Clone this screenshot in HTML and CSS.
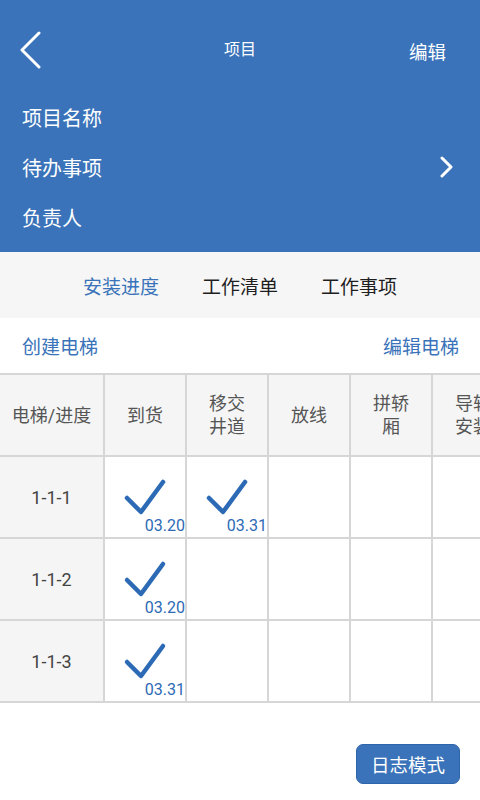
FILE: index.html
```html
<!DOCTYPE html>
<html>
<head>
<meta charset="utf-8">
<title>项目</title>
<link rel="stylesheet" href="styles.css">
</head>
<body>
    <!-- header -->
    <div class="header">
        <div class="topbar">
            <svg class="back" width="30" height="40" viewBox="0 0 30 40">
                <path d="M19 2 L2 19 L19 36" fill="none" stroke="#fff" stroke-width="3" stroke-linecap="round" stroke-linejoin="round"/>
            </svg>
            <div class="title">项目</div>
            <div class="edit">编辑</div>
        </div>
        <div class="info">
            <div class="info-row">项目名称</div>
            <div class="info-row">待办事项
                <svg class="more" width="14" height="22" viewBox="0 0 14 22">
                    <path d="M2 2 L11 11 L2 20" fill="none" stroke="#fff" stroke-width="3" stroke-linecap="round" stroke-linejoin="round"/>
                </svg>
            </div>
            <div class="info-row">负责人</div>
        </div>
    </div>

    <!-- tabs -->
    <div class="tabs">
        <div class="tab active">安装进度</div>
        <div class="tab">工作清单</div>
        <div class="tab">工作事项</div>
    </div>

    <div class="actions">
        <span>创建电梯</span>
        <span>编辑电梯</span>
    </div>

    <!-- progress table -->
    <div class="table-wrap">
        <table class="grid">
            <colgroup>
                <col class="col-first">
                <col class="col">
                <col class="col">
                <col class="col">
                <col class="col">
                <col class="col">
            </colgroup>
            <tr class="head">
                <td class="first">电梯/进度</td>
                <td>到货</td>
                <td>移交<br>井道</td>
                <td>放线</td>
                <td>拼轿<br>厢</td>
                <td>导轨<br>安装</td>
            </tr>
            <tr>
                <td class="first">1-1-1</td>
                <td><div class="done"><svg width="46" height="40" viewBox="0 0 46 40"><path d="M5 21 L19 35 L41 5" fill="none" stroke="#2d6ab6" stroke-width="4.5" stroke-linecap="round" stroke-linejoin="round"/></svg><span>03.20</span></div></td>
                <td><div class="done"><svg width="46" height="40" viewBox="0 0 46 40"><path d="M5 21 L19 35 L41 5" fill="none" stroke="#2d6ab6" stroke-width="4.5" stroke-linecap="round" stroke-linejoin="round"/></svg><span>03.31</span></div></td>
                <td></td>
                <td></td>
                <td></td>
            </tr>
            <tr>
                <td class="first">1-1-2</td>
                <td><div class="done"><svg width="46" height="40" viewBox="0 0 46 40"><path d="M5 21 L19 35 L41 5" fill="none" stroke="#2d6ab6" stroke-width="4.5" stroke-linecap="round" stroke-linejoin="round"/></svg><span>03.20</span></div></td>
                <td></td>
                <td></td>
                <td></td>
                <td></td>
            </tr>
            <tr>
                <td class="first">1-1-3</td>
                <td><div class="done"><svg width="46" height="40" viewBox="0 0 46 40"><path d="M5 21 L19 35 L41 5" fill="none" stroke="#2d6ab6" stroke-width="4.5" stroke-linecap="round" stroke-linejoin="round"/></svg><span>03.31</span></div></td>
                <td></td>
                <td></td>
                <td></td>
                <td></td>
            </tr>
        </table>
    </div>

    <div class="footer">
        <button class="log-btn">日志模式</button>
    </div>
</body>
</html>
```

FILE: styles.css
```css
* {
    margin: 0;
    padding: 0;
    box-sizing: border-box;
}

body {
    width: 480px;
    height: 800px;
    overflow: hidden;
    background-color: #fff;
    font-family: Roboto, "Noto Sans CJK SC", sans-serif;
    color: #333;
}

.header {
    background-color: #3a73b9;
    height: 252px;
    color: #fff;
}

.topbar {
    height: 92px;
    padding: 8px 34px 0 20px;
    display: flex;
    align-items: center;
    position: relative;
}

.back {
    margin-top: 2px;
}

.title {
    position: absolute;
    left: 0;
    right: 0;
    top: 8px;
    text-align: center;
    font-size: 16px;
    line-height: 84px;
}

.edit {
    margin-left: auto;
    font-size: 18.5px;
    position: relative;
    top: 1px;
}

.info {
    padding: 0 26px 0 22px;
}

.info-row {
    height: 50px;
    font-size: 20px;
    display: flex;
    align-items: center;
    justify-content: space-between;
}

.tabs {
    height: 66px;
    background-color: #f6f6f6;
    display: flex;
    justify-content: center;
    align-items: center;
}

.tab {
    width: 119px;
    text-align: center;
    font-size: 19px;
    color: #1e1e1e;
}

.tab.active {
    color: #3a73b9;
}

.actions {
    height: 55px;
    display: flex;
    justify-content: space-between;
    align-items: center;
    padding: 0 21px 0 22px;
    font-size: 19px;
    color: #3a73b9;
}

.table-wrap {
    width: 480px;
    overflow: hidden;
}

.grid {
    border-collapse: collapse;
    table-layout: fixed;
    width: 514px;
}

.col-first {
    width: 104px;
}

.col {
    width: 82px;
}

.grid td {
    border: 2px solid #d6d6d6;
    height: 82px;
    text-align: center;
    vertical-align: middle;
    font-size: 18px;
    color: #444;
    padding: 0;
}

.grid td.first {
    border-left: none;
    background-color: #f5f5f5;
}

.grid .head td {
    background-color: #f5f5f5;
    color: #555;
    line-height: 23px;
    white-space: nowrap;
    overflow: hidden;
}

.done {
    display: flex;
    flex-direction: column;
    align-items: center;
    height: 80px;
    padding-top: 20px;
}

.done span {
    align-self: flex-end;
    font-size: 16px;
    line-height: 18px;
    color: #2d6ab6;
}

.footer {
    display: flex;
    justify-content: flex-end;
    padding: 41px 20px 0 0;
}

.log-btn {
    width: 104px;
    height: 40px;
    border: 1px solid #2f66ab;
    border-radius: 7px;
    background-color: #3a73b9;
    color: #fff;
    font-family: "Noto Sans CJK SC", sans-serif;
    font-size: 18.5px;
}
```
